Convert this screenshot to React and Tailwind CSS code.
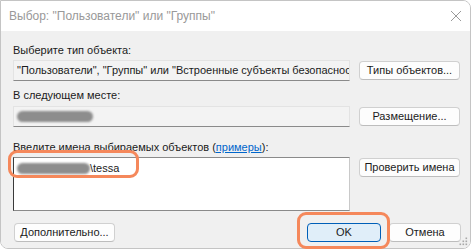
import React from 'react';

const font = { fontFamily: '"Liberation Sans", Arial, sans-serif' };

const Button = ({ children, className = '' }) => (
  <button
    className={`flex items-center justify-center whitespace-nowrap rounded-[4px] border border-[#d0d0d0] border-b-[#bdbdbd] bg-[#fdfdfd] text-[11px] text-[#1b1b1b] ${className}`}
  >
    {children}
  </button>
);

const Blob = ({ className = '' }) => (
  <span className={`inline-block rounded-full bg-[#8d8d8d] blur-[1px] ${className}`} />
);

const Grip = () => (
  <svg width="9" height="9" viewBox="0 0 9 9" className="absolute right-[2px] bottom-[2px]">
    {[
      [7, 1],
      [7, 4],
      [4, 4],
      [7, 7],
      [4, 7],
      [1, 7],
    ].map(([x, y]) => (
      <rect key={`${x}-${y}`} x={x - 0.5} y={y - 0.5} width="1.6" height="1.6" fill="#a8a8a8" />
    ))}
  </svg>
);

export default function App() {
  return (
    <div className="relative h-[252px] w-[474px] overflow-hidden bg-white" style={font}>
      <div className="relative flex h-[249px] w-[471px] flex-col overflow-hidden rounded-tr-[8px] rounded-b-[8px] border border-[#c4c4c4]">
        {/* Title bar */}
        <div className="flex h-[30px] shrink-0 items-center justify-between bg-white pl-[8px] pr-[6px]">
          <span className="text-[12px] text-[#999999]">Выбор: "Пользователи" или "Группы"</span>
          <svg width="12" height="12" viewBox="0 0 12 12" className="mr-[2px]">
            <path d="M1 1 L11 11 M11 1 L1 11" stroke="#9a9a9a" strokeWidth="1" fill="none" />
          </svg>
        </div>

        {/* Body */}
        <div className="relative flex flex-1 flex-col bg-[#f0f0f0] pl-[12px] pr-[9px] pt-[11px] text-[11px] text-[#1b1b1b]">
          <div className="h-[17px] leading-[17px]">Выберите тип объекта:</div>
          <div className="mt-[1px] flex items-center gap-[9px]">
            <div className="flex h-[21px] w-[337px] shrink-0 items-center overflow-hidden whitespace-nowrap border border-[#e3e3e3] border-b-[#8a8a8a] bg-[#f3f3f3] pl-[3px]">
              <span className="overflow-hidden">"Пользователи", "Группы" или "Встроенные субъекты безопаснос</span>
            </div>
            <Button className="h-[19px] w-[101px]">Типы объектов...</Button>
          </div>

          <div className="mt-[6px] h-[17px] leading-[17px]">В следующем месте:</div>
          <div className="mt-[2px] flex items-center gap-[9px]">
            <div className="flex h-[21px] w-[337px] shrink-0 items-center border border-[#e3e3e3] border-b-[#8a8a8a] bg-[#f3f3f3] pl-[3px]">
              <Blob className="h-[11px] w-[76px]" />
            </div>
            <Button className="h-[19px] w-[101px]">Размещение...</Button>
          </div>

          <div className="mt-[12px] h-[17px] leading-[17px]">
            Введите имена выбираемых объектов (
            <span className="text-[#0066cc] underline">примеры</span>):
          </div>
          <div className="mt-[1px] flex items-start gap-[9px]">
            <div className="h-[54px] w-[337px] shrink-0 border border-[#8a8a8a] border-l-[#3a3a3a] border-r-[#c9c9c9] bg-white pl-[3px] pt-[3px]">
              <span className="inline-flex items-center border-b border-[#111]">
                <Blob className="h-[11px] w-[73px]" />
                <span className="leading-[14px]">\tessa</span>
              </span>
            </div>
            <Button className="mt-[1px] h-[19px] w-[101px]">Проверить имена</Button>
          </div>

          <div className="mt-[12px] flex items-center">
            <Button className="ml-[1px] h-[19px] w-[101px]">Дополнительно...</Button>
            <div className="flex-1" />
            <button className="flex h-[19px] w-[74px] items-center justify-center rounded-[4px] border border-[#005fb8] bg-[#e0eef9] text-[11px] text-[#1b1b1b]">
              OK
            </button>
            <Button className="ml-[8px] h-[19px] w-[72px]">Отмена</Button>
          </div>

          <Grip />
        </div>
      </div>

      {/* Orange callouts */}
      <div className="absolute left-[8px] top-[150px] h-[28px] w-[131px] rounded-[9px] border-[3px] border-[#f5885b]" />
      <div className="absolute left-[297px] top-[212px] h-[37px] w-[93px] rounded-[9px] border-[3px] border-[#f5885b]" />
    </div>
  );
}
